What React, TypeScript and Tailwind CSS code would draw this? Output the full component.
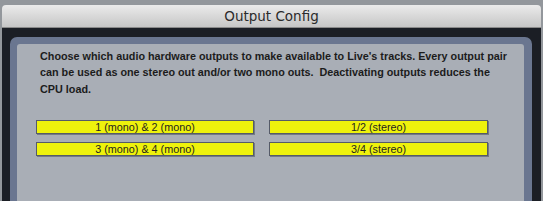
import React from 'react';

const pairs = [
  { left: '1 (mono) & 2 (mono)', right: '1/2 (stereo)' },
  { left: '3 (mono) & 4 (mono)', right: '3/4 (stereo)' },
];

const OutputButton: React.FC<{ label: string; className?: string }> = ({ label, className = '' }) => (
  <button
    className={`h-[14px] bg-[#eef20c] border border-[#555b68] shadow-[1px_1px_0_rgba(80,86,100,0.6)] text-[10.8px] leading-[12px] text-[#1e1e1e] text-center ${className}`}
    style={{ fontFamily: '"Liberation Sans", Arial, sans-serif' }}
  >
    {label}
  </button>
);

export default function App() {
  return (
    <div className="w-[543px] h-[201px] overflow-hidden bg-[#93979c] pt-[5px] pl-[2px] pr-[2px] flex flex-col">
      {/* Title bar */}
      <div className="h-[23px] shrink-0 rounded-t-[4px] bg-gradient-to-b from-[#ebebeb] to-[#c6c6c6] border-b border-[#8a8a8a] flex items-center justify-center">
        <span className="text-[13.5px] text-[#2b2b2b]" style={{ fontFamily: '"DejaVu Sans", Verdana, sans-serif' }}>
          Output Config
        </span>
      </div>

      {/* Dark window body */}
      <div className="flex-1 bg-[#1b1e25] pl-[8px] pr-[9px] pt-[9px] flex flex-col">
        <div className="flex-1 bg-[#6a7690] rounded-t-[7px] pl-[7px] pr-[8px] pt-[7px] flex flex-col">
          <div className="flex-1 bg-[#a9aeb6] rounded-t-[3px] pl-[19px] pt-[4px]">
            <p
              className="ml-[4px] text-[10.8px] leading-[16.3px] font-bold text-[#1c1c1c] whitespace-pre"
              style={{ fontFamily: '"Liberation Sans", Arial, sans-serif' }}
            >
              {"Choose which audio hardware outputs to make available to Live's tracks. Every output pair\ncan be used as one stereo out and/or two mono outs.  Deactivating outputs reduces the\nCPU load."}
            </p>

            <div className="mt-[23px] flex flex-col gap-[8px]">
              {pairs.map((p) => (
                <div key={p.left} className="flex gap-[15px]">
                  <OutputButton label={p.left} className="w-[218px]" />
                  <OutputButton label={p.right} className="w-[219px]" />
                </div>
              ))}
            </div>
          </div>
        </div>
      </div>
    </div>
  );
}
